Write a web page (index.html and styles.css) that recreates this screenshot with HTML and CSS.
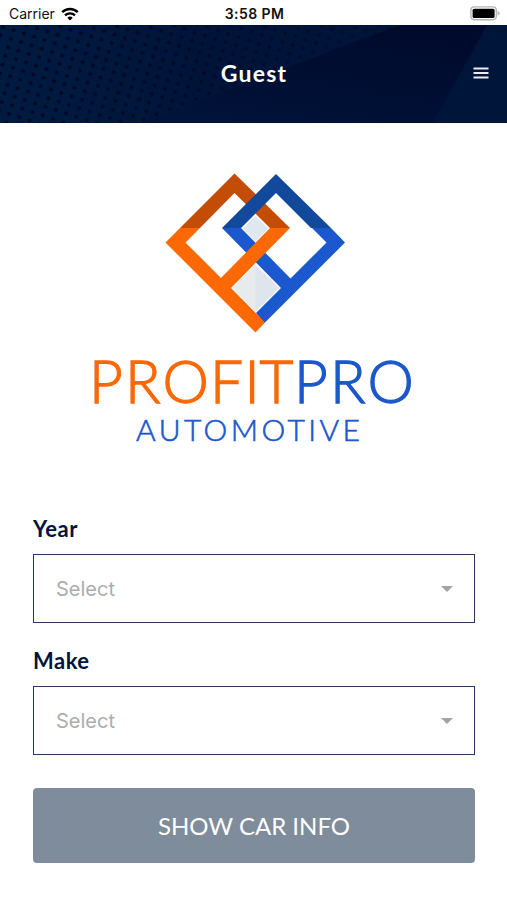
FILE: index.html
```html
<!doctype html>
<html lang="en">
<head>
	<title>ProfitPro Automotive</title>
	<meta charset="utf-8">
	<meta name="viewport" content="width=device-width, initial-scale=1">
	<link rel="stylesheet" href="styles.css">
</head>

<body>
	<div class="status-bar">
		<div class="status-carrier">
			<span>Carrier</span>
			<svg class="icon-wifi" width="18" height="14" viewBox="0 0 18 14">
				<path d="M1.2 5.2a11.2 11.2 0 0 1 15.6 0" fill="none" stroke="#000" stroke-width="2.4"/>
				<path d="M4 8.3a7.2 7.2 0 0 1 10 0" fill="none" stroke="#000" stroke-width="2.3"/>
				<path d="M9 13.6L6.3 10.8a3.9 3.9 0 0 1 5.4 0z"/>
			</svg>
		</div>
		<div class="status-time">3:58 PM</div>
		<div class="status-power">
			<svg width="30" height="15" viewBox="0 0 30 15">
				<rect x=".9" y=".9" width="25.4" height="12.8" rx="3.4" fill="#fff" stroke="#b5b5b5" stroke-width="1.4"/>
				<rect x="2.6" y="2.7" width="22" height="9.3" rx="1.6"/>
				<path d="M27.6 4.8q2 .8 2 2.5t-2 2.5z" fill="#b5b5b5"/>
			</svg>
		</div>
	</div>

	<div class="header">
		<svg class="header-bg" width="507" height="98" viewBox="0 0 507 98">
			<defs>
				<linearGradient id="base">
					<stop offset="0" stop-color="#001b40"/>
					<stop offset=".4" stop-color="#001439"/>
					<stop offset="1" stop-color="#00153a"/>
				</linearGradient>
				<linearGradient id="beam" x1="0" y1="1" x2=".6" y2="0">
					<stop offset="0" stop-color="#00143a"/>
					<stop offset="1" stop-color="#000a2d"/>
				</linearGradient>
				<linearGradient id="fade" x1="0" y1="0" x2="1" y2=".1">
					<stop offset="0" stop-color="#fff"/>
					<stop offset=".3" stop-color="#ccc"/>
					<stop offset=".8" stop-color="#555"/>
				</linearGradient>
				<pattern id="dots" width="10.8" height="9" patternUnits="userSpaceOnUse" patternTransform="translate(0 -4) rotate(18)">
					<circle cx="5" cy="4.5" r="2" fill="#000625"/>
				</pattern>
				<mask id="dots-mask">
					<rect width="507" height="98" fill="url(#fade)"/>
				</mask>
			</defs>
			<rect width="507" height="98" fill="url(#base)"/>
			<path d="M0 0H400L190 98H0z" fill="url(#dots)" mask="url(#dots-mask)"/>
			<path d="M400 0L140 98H433L487 0z" fill="url(#beam)"/>
		</svg>
		<h1 class="header-title">Guest</h1>
		<svg class="icon-menu" width="16" height="12" viewBox="0 0 16 12">
			<path d="M.5 1.5h15M.5 6h15M.5 10.5h15" stroke="#e8ebf2" stroke-width="2"/>
		</svg>
	</div>

	<div class="content">
		<svg class="logo" width="340" height="290" viewBox="84 165 340 290">
			<!-- tinted gaps between the two diamonds -->
			<path d="M255.500 216L268.500 228.500 255.500 241.500 242.500 228.500z" fill="#dfe7ef"/>
			<path d="M255.500 265L279 288 255.500 311.500 232.500 288z" fill="#e8ebee"/>
			<path d="M255.500 265L279 288 255.500 311.500z" fill="#dfe5ec"/>

			<!-- orange top -->
			<path d="M180 228L234.500 173.500 290 228H270L234.500 193 200 228z" fill="#c44d05"/>

			<!-- blue diamond -->
			<path d="M222 228L276 174 331 228H311L276 193 241 228z" fill="#12499b"/>
			<path d="M222 228H241L290.500 278.500 326.500 242.500 312 228H331L345 242.500 264.500 323 256 313 281 288z" fill="#1b57cd"/>

			<!-- orange front -->
			<path d="M180 228H200L185.500 242.500 221 278 270 228H290L231 288 265 322.500 255.500 332.500 165.500 242.500z" fill="#fb6804"/>

			<text class="logo-profit" x="89 125 162.500 210 244.500 259.500" y="403">PROFIT</text>
			<text class="logo-pro" x="294 330 367.500" y="403">PRO</text>
			<text class="logo-auto" x="136" y="441" textLength="224">AUTOMOTIVE</text>
		</svg>

		<div class="form">
			<label class="field-label">Year</label>
			<div class="select">
				<span>Select</span>
				<i class="select-arrow"></i>
			</div>

			<label class="field-label">Make</label>
			<div class="select">
				<span>Select</span>
				<i class="select-arrow"></i>
			</div>

			<button class="btn-show" type="button"><span>SHOW CAR INFO</span></button>
		</div>
	</div>
</body>
</html>
```
FILE: styles.css
```css
body, h1 {
	padding: 0;
	margin: 0;
}
body {
	font-family: Inter, sans-serif;
	background: #fff;
}

.status-bar {
	display: grid;
	grid-template-columns: 1fr auto 1fr;
	align-items: center;
	height: 25px;
	padding: 2px 7px 0 9px;
	box-sizing: border-box;
	font-size: 14px;
	color: #111;
}
.status-carrier {
	display: flex;
	align-items: center;
	gap: 6px;
}
.status-time {
	font-weight: 600;
	letter-spacing: .4px;
}
.status-power {
	display: flex;
	justify-content: flex-end;
}

.header {
	position: relative;
	display: flex;
	align-items: center;
	justify-content: center;
	height: 98px;
	background: #001438;
}
.header-bg {
	position: absolute;
	left: 0;
	top: 0;
}
.header-title {
	position: relative;
	padding: 0 0 2px 1px;
	font-family: Lato, sans-serif;
	font-size: 23px;
	line-height: 28px;
	font-weight: 700;
	letter-spacing: 1.2px;
	color: #fff;
}
.icon-menu {
	position: absolute;
	right: 18px;
	top: 42px;
}

.content {
	padding: 42px 32px 0 33px;
}
.logo {
	display: block;
	margin: 0 auto 58px 51px;
}
.logo text {
	font-family: Lato, sans-serif;
	font-weight: 300;
}
.logo .logo-profit,
.logo .logo-pro {
	font-size: 58.5px;
	stroke-width: 1.3px;
}
.logo .logo-profit {
	fill: #fb6804;
	stroke: #fb6804;
}
.logo .logo-pro {
	fill: #1b57cd;
	stroke: #1b57cd;
}
.logo .logo-auto {
	font-size: 30px;
	fill: #1b57cd;
	stroke: #1b57cd;
	stroke-width: .6px;
}

.field-label {
	display: block;
	height: 30px;
	margin-bottom: 11px;
	font-family: Lato, sans-serif;
	font-size: 22px;
	line-height: 32px;
	font-weight: 700;
	letter-spacing: .5px;
	color: #001440;
}
.select {
	display: flex;
	align-items: center;
	justify-content: space-between;
	height: 69px;
	padding: 0 21px 0 22px;
	margin-bottom: 22px;
	box-sizing: border-box;
	border: 1px solid #26355a;
	font-size: 20px;
	color: #adadad;
}
.select-arrow {
	border: 6px solid transparent;
	border-top-color: #a3a3a3;
	border-bottom: 0;
}
.btn-show {
	display: block;
	width: 442px;
	height: 75px;
	margin-top: 33px;
	border: 0;
	border-radius: 4px;
	background: #7f8c9b;
	font-family: Lato, sans-serif;
	font-size: 24px;
	color: #fff;
}
```
